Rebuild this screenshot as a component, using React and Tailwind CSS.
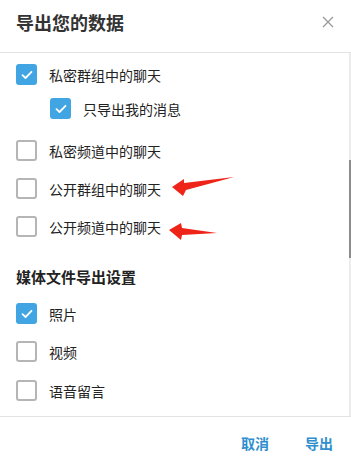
import React from "react";

const font = { fontFamily: '"Noto Sans CJK SC", "Noto Sans", sans-serif' };

function Box({ checked }) {
  if (checked) {
    return (
      <span className="flex h-[21px] w-[21px] shrink-0 items-center justify-center rounded-[3px] bg-[#40a5e2]">
        <svg width="12" height="10" viewBox="0 0 12 10" fill="none">
          <path d="M1.5 5.2 4.5 8 10.5 1.8" stroke="white" strokeWidth="1.8" strokeLinecap="round" strokeLinejoin="round" />
        </svg>
      </span>
    );
  }
  return <span className="h-[21px] w-[21px] shrink-0 rounded-[3px] border-2 border-[#b5b5b5] bg-white" />;
}

function Row({ checked, label, className = "" }) {
  return (
    <div className={`flex h-[21px] items-center gap-[12px] ${className}`}>
      <Box checked={checked} />
      <span className="text-[14px] leading-none text-[#222]">{label}</span>
    </div>
  );
}

export default function App() {
  return (
    <div className="relative flex h-[463px] w-[351px] flex-col bg-white" style={font}>
      <div className="flex h-[53px] shrink-0 items-start justify-between border-b border-[#e3e3e3] pl-[16px] pr-[17px] pt-[13px]">
        <h1 className="text-[18px] font-bold leading-[18px] text-[#333]">导出您的数据</h1>
        <svg width="12" height="12" viewBox="0 0 12 12" className="mt-[3px]">
          <path d="M1 1 11 11M11 1 1 11" stroke="#9a9a9a" strokeWidth="1.3" />
        </svg>
      </div>

      <div className="relative flex-1 overflow-hidden border-b border-[#e3e3e3] pl-[16px] pt-[11px]">
        <Row checked label="私密群组中的聊天" />
        <Row checked label="只导出我的消息" className="ml-[34px] mt-[13px]" />
        <Row label="私密频道中的聊天" className="mt-[21px]" />
        <Row label="公开群组中的聊天" className="mt-[17px]" />
        <Row label="公开频道中的聊天" className="mt-[17px]" />
        <div className="mt-[30px] text-[15px] font-bold leading-[20px] text-[#222]">媒体文件导出设置</div>
        <Row checked label="照片" className="mt-[16px]" />
        <Row label="视频" className="mt-[17px]" />
        <Row label="语音留言" className="mt-[18px]" />

        <div className="absolute right-0 top-0 h-full w-[2px] bg-[#ececec]" />
        <div className="absolute right-0 top-[107px] h-[98px] w-[2px] bg-[#8c8c8c]" />
      </div>

      <div className="flex h-[46px] shrink-0 items-center justify-end gap-[36px] pr-[18px] pt-[6px]">
        <button className="text-[14px] font-bold text-[#2f8fce]">取消</button>
        <button className="text-[14px] font-bold text-[#2f8fce]">导出</button>
      </div>

      <svg className="pointer-events-none absolute left-0 top-0" width="351" height="463">
        <polygon points="172,187 184,179 184,183 234,177 186,190 183,196" fill="#ee2418" />
        <polygon points="169,230 181,223 182,228 217,233 182,235 181,240" fill="#ee2418" />
      </svg>
    </div>
  );
}
